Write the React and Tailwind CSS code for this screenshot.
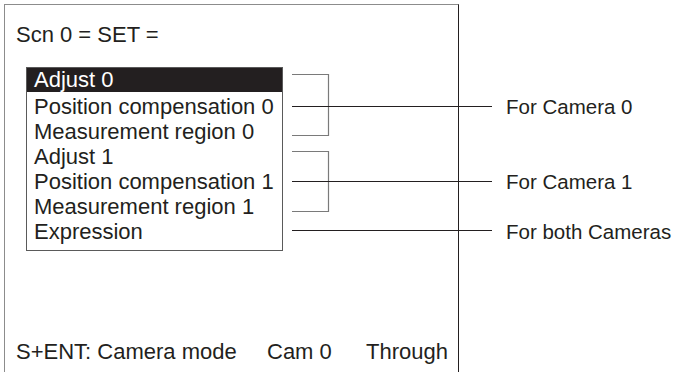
import React from 'react';

const items = [
  'Position compensation 0',
  'Measurement region 0',
  'Adjust 1',
  'Position compensation 1',
  'Measurement region 1',
  'Expression',
];

const Connectors = () => (
  <svg
    className="absolute left-0 top-0 pointer-events-none"
    width="682"
    height="372"
    viewBox="0 0 682 372"
  >
    {/* bracket camera 0 */}
    <path d="M292 74.5H328.5V135.5H292" fill="none" stroke="#7a7a7a" strokeWidth="1.2" />
    <path d="M292 106.5H492" stroke="#231f20" strokeWidth="1.2" />
    {/* bracket camera 1 */}
    <path d="M292 151.5H328.5V211.5H292" fill="none" stroke="#7a7a7a" strokeWidth="1.2" />
    <path d="M292 181.5H492" stroke="#231f20" strokeWidth="1.2" />
    {/* expression */}
    <path d="M292 230.5H492" stroke="#231f20" strokeWidth="1.2" />
  </svg>
);

export default function App() {
  return (
    <div
      className="relative w-[682px] h-[372px] overflow-hidden bg-white text-[#231f20]"
      style={{ fontFamily: '"Liberation Sans", Arial, sans-serif' }}
    >
      <div className="flex">
        {/* monitor screen */}
        <div className="pl-[4px] pt-[4px]">
          <div className="w-[455px] h-[390px] border-l border-t border-r border-l-[#8c8c8c] border-t-[#8c8c8c] border-r-[#231f20] pl-[11px] pt-[17px] flex flex-col">
            <p className="text-[22px] leading-[25px]">Scn 0 = SET =</p>

            <div className="ml-[10px] mt-[20px] w-[257px] border border-[#5a5a5a] pb-[6px]">
              <div className="h-[24px] bg-[#231f20] text-white pl-[7px] text-[22px] leading-[24px]">
                Adjust 0
              </div>
              <div className="pt-[2px]">
                {items.map((item) => (
                  <div key={item} className="h-[25px] pl-[7px] text-[22px] leading-[25px]">
                    {item}
                  </div>
                ))}
              </div>
            </div>

            <div className="mt-[88px] flex text-[22px] leading-[25px]">
              <span className="w-[251px]">S+ENT: Camera mode</span>
              <span className="w-[99px]">Cam 0</span>
              <span>Through</span>
            </div>
          </div>
        </div>

        {/* annotations */}
        <div className="ml-[47px] pt-[94px] flex flex-col text-[20.5px] leading-[25px] whitespace-nowrap">
          <span>For Camera 0</span>
          <span className="mt-[50px]">For Camera 1</span>
          <span className="mt-[25px]">For both Cameras</span>
        </div>
      </div>

      <Connectors />
    </div>
  );
}
